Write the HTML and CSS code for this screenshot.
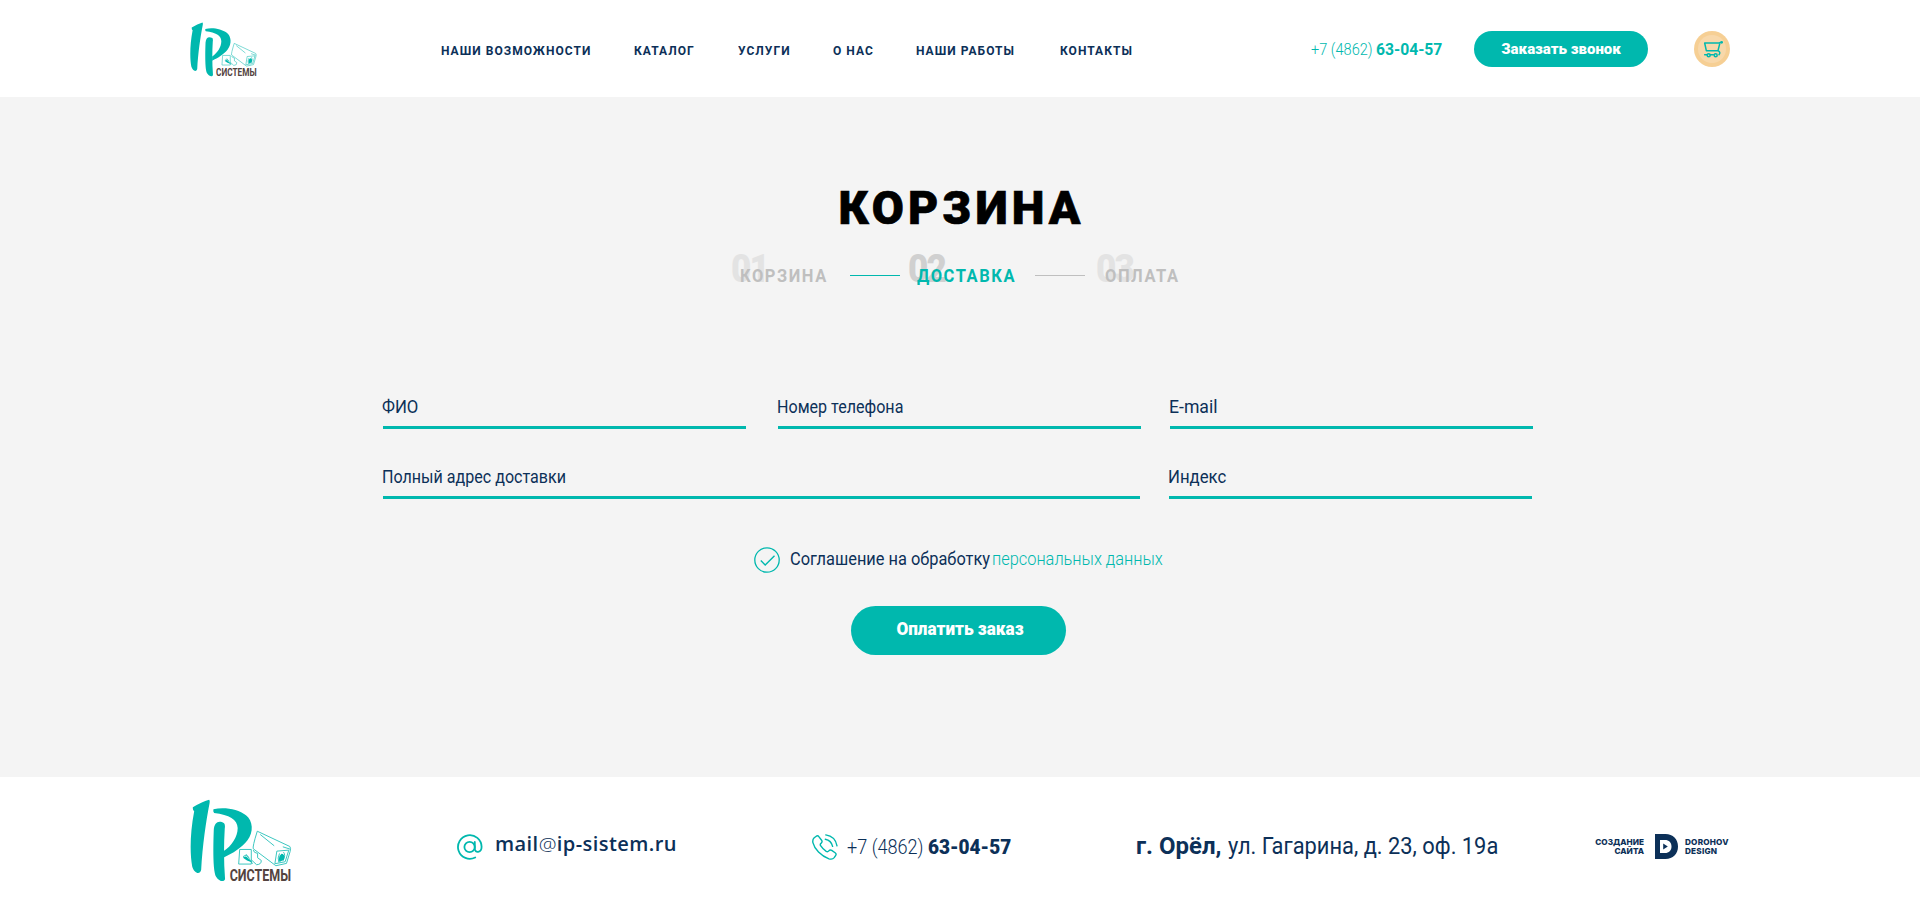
FILE: index.html
```html
<!DOCTYPE html>
<html lang="ru">
<head>
<meta charset="utf-8">
<title>Корзина — IP Системы</title>
<link rel="stylesheet" href="styles.css">
</head>
<body>
<svg class="defs" width="0" height="0" aria-hidden="true">
  <symbol id="logo" viewBox="62 85 306 250">
    <g fill="#00b8ae">
      <path d="M70 110Q96 93 119 87Q122 89 120 99C110 150 99 225 95 299C91 314 74 309 68 288C61 250 61 190 74 122Q69 119 70 110Z"/>
      <path d="M133 178C135 156 147 148 164 158Q168 162 166 175C163 225 163 275 167 326C164 337 149 333 140 319C130 303 131 230 133 178Z"/>
      <path d="M132 116C165 108 207 116 230 134C251 151 254 184 234 210C218 231 190 249 163 261L163 242C186 226 205 200 205 172C204 146 180 133 134 127Q130 122 132 116Z"/>
    </g>
    <g fill="none" stroke="#35c5bd" stroke-width="2.9" stroke-linejoin="round">
      <path d="M264 182L362 228Q366 232 363 243L352 279L320 286L252 235Q249 230 264 182Z"/>
      <path d="M273 192L315 226M341 229L363 236"/>
      <path d="M323 242L359 239L348 274L317 280ZM331 249Q324 263 329 276M343 245Q351 254 341 272"/>
      <path d="M211 237H246V281H208ZM252 239Q253 247 265 249V262L276 270Q277 282 262 283L246 268M230 251L250 280M221 259Q229 250 240 262"/>
    </g>
    <path d="M337 250Q325 259 331 275L344 268Q349 251 337 250ZM221 262Q230 253 238 266L249 276L233 270Z" fill="#00b8ae"/>
    <text class="logo-text" x="181" y="332" textLength="185" lengthAdjust="spacingAndGlyphs">СИСТЕМЫ</text>
  </symbol>
</svg>

<header class="header">
  <a class="logo"><svg width="67" height="55"><use href="#logo"/></svg></a>
  <nav class="nav">
    <a>НАШИ ВОЗМОЖНОСТИ</a><a>КАТАЛОГ</a><a>УСЛУГИ</a><a>О НАС</a><a>НАШИ РАБОТЫ</a><a>КОНТАКТЫ</a>
  </nav>
  <a class="phone"><span class="code">+7 (4862)</span><b>63-04-57</b></a>
  <button class="btn btn-call">Заказать звонок</button>
  <a class="cart">
    <svg width="36" height="36" viewBox="18 18 108 108">
      <circle cx="72" cy="72" r="54" fill="#f6cf94"/><circle cx="72" cy="72" r="42" fill="#f8d8aa"/>
      <g fill="none" stroke="#00b8ae" stroke-width="4.5" stroke-linejoin="round" stroke-linecap="round">
        <path d="M100 52L93 54H50L55 77H90L96 53M90 77Q99 82 93 89M50 89H57M67 89H76"/>
        <circle cx="62" cy="91" r="4.5"/><circle cx="83" cy="91" r="4.5"/>
      </g>
      <circle cx="101" cy="52" r="4" fill="#00b8ae"/>
    </svg>
  </a>
</header>

<main class="main">
  <h1 class="title">КОРЗИНА</h1>
  <div class="steps">
    <div class="step"><i>01</i><span>КОРЗИНА</span></div>
    <div class="line line-active"></div>
    <div class="step active"><i>02</i><span>ДОСТАВКА</span></div>
    <div class="line"></div>
    <div class="step"><i>03</i><span>ОПЛАТА</span></div>
  </div>

  <form class="form">
    <div class="row row-three">
      <label class="field"><span class="wide">ФИО</span></label>
      <label class="field"><span>Номер телефона</span></label>
      <label class="field"><span class="full">E-mail</span></label>
    </div>
    <div class="row row-two">
      <label class="field"><span>Полный адрес доставки</span></label>
      <label class="field"><span class="wide">Индекс</span></label>
    </div>
    <div class="consent">
      <svg width="26" height="26" viewBox="0 0 26 26" fill="none" stroke="#00b8ae"><circle cx="13" cy="13" r="12.2" stroke-width="1.3"/><path d="M6.8 13.6L11.2 18L20.5 8.8" stroke-width="1.4"/></svg>
      <span class="consent-text">Соглашение на обработку</span>
      <a class="consent-link">персональных данных</a>
    </div>
    <button class="btn btn-pay" type="button"><span>Оплатить заказ</span></button>
  </form>
</main>

<footer class="footer">
  <a class="footer-logo"><svg width="102" height="83"><use href="#logo"/></svg></a>
  <a class="contact">
    <svg width="26" height="26" viewBox="0 0 26 26" fill="none" stroke="#00b8ae" stroke-width="1.8" stroke-linecap="round"><circle cx="12.6" cy="13" r="5.2"/><path d="M17.8 8V14.8C17.8 19.4 24.6 19 24.6 12.8A11.8 11.8 0 1 0 18.2 23.5"/></svg>
    <span class="mail">mail<em>@</em>ip-sistem.ru</span>
  </a>
  <a class="contact">
    <svg width="26" height="26" viewBox="0 0 26 26" fill="none" stroke="#00b8ae" stroke-width="1.4" stroke-linecap="round" stroke-linejoin="round"><path d="M2.2 3.8L4.3 2.2Q5.8 1.2 7 2.8L9.6 6.2Q10.7 7.8 9.2 9.1Q7.7 10.3 8.6 11.7Q11 15.3 14.2 17.4Q15.7 18.3 16.8 16.9Q18.2 15.3 19.7 16.4L23.1 18.8Q24.7 20.1 23.7 21.4L22.2 23.6Q20.5 25.8 17 24.8Q11.2 22.8 6.5 18Q2 13.2 .9 8.6Q.3 5.7 2.2 3.8ZM13.8 .9Q23.2 2.3 25 11.8M13.3 5.2Q19.3 6.4 20.6 12.4"/></svg>
    <span class="footer-phone"><span class="code">+7 (4862)</span><b>63-04-57</b></span>
  </a>
  <address class="address"><b>г. Орёл,</b><span>ул. Гагарина, д. 23, оф. 19а</span></address>
  <a class="credit">
    <span class="made">СОЗДАНИЕ<br>САЙТА</span>
    <svg width="23" height="25" viewBox="0 0 23 25"><path fill="#0c3058" fill-rule="evenodd" d="M0 0H10.5C18 0 23 5 23 12.5S18 25 10.5 25H0ZM5 6V19H10C14 19 16.5 16.5 16.5 12.5S14 6 10 6ZM8.2 9.5L12.8 12.5L8.2 15.5Z"/></svg>
    <span class="studio">DOROHOV<br>DESIGN</span>
  </a>
</footer>
</body>
</html>
```
FILE: styles.css
```css
* { box-sizing: border-box; }
body { margin: 0; width: 1920px; height: 908px; overflow: hidden; background: #fff; color: #0c3058; font-family: Roboto, "Liberation Sans", sans-serif; white-space: nowrap; }
svg { display: block; }
.defs { position: absolute; }
.logo-text { font: 700 50px Roboto, sans-serif; fill: #54433f; }

.header { display: grid; grid-template-columns: 251px 869.5px 163.5px 220px 36px; height: 97px; padding-left: 190px; align-items: start; }
.logo { padding-top: 22px; }
.nav { display: grid; grid-template-columns: 193px 104px 95px 83px 143.5px 80px; padding-top: 41px; font-size: 13px; line-height: 20px; font-weight: 700; letter-spacing: 1.1px; }
.nav a { justify-self: start; transform: scaleX(.925); transform-origin: 0 50%; }
.phone { display: flex; padding-top: 40px; font-size: 16px; line-height: 20px; color: #00b8ae; }
.phone .code { width: 65px; font-weight: 300; transform: scaleX(.91); transform-origin: 0 50%; }
.phone b { transform: scaleX(.98); transform-origin: 0 50%; }
.btn { display: block; padding: 0; border: 0; background: #00b8ae; color: #fff; font-family: inherit; text-align: center; }
.btn-call { width: 174px; height: 36px; margin-top: 31px; border-radius: 18px; font-size: 15px; line-height: 36px; font-weight: 900; }
.cart { padding-top: 31px; }

.main { height: 680px; padding-top: 81px; background: #f4f4f4; }
.title { margin: 0; padding-left: 3px; font-size: 46.5px; line-height: 60px; font-weight: 900; letter-spacing: 4px; text-align: center; color: #000; -webkit-text-stroke: .7px #000; }
.steps { display: grid; grid-template-columns: 110px 67px 118px 70px 80px; align-items: center; height: 24px; margin: 26px 0 0 740px; font-size: 18px; line-height: 24px; font-weight: 700; color: #bfbfbf; }
.step { position: relative; }
.step i { position: absolute; left: -9px; top: -15px; font-size: 39px; line-height: 40px; font-style: normal; font-weight: 900; letter-spacing: -2px; color: #e3e3e3; transform: scaleX(.9); transform-origin: 0 50%; }
.step span { position: relative; display: block; letter-spacing: 1.7px; transform: scaleX(.915); transform-origin: 0 50%; }
.active { color: #00b8ae; }
.active i { color: #d0d0d0; }
.line { width: 50px; height: 1px; margin-bottom: 1px; background: #bfbfbf; }
.line-active { background: #00b8ae; }

.form { margin: 107px 0 0 383px; }
.row { display: grid; height: 34px; }
.row-three { grid-template-columns: 363px 363px 363px; column-gap: 32px; }
.row-three .field:last-child { margin-left: -3px; margin-right: 3px; }
.row-two { grid-template-columns: 757px 363px; column-gap: 29px; margin-top: 36px; }
.field { border-bottom: 3px solid #00b8ae; font-size: 18px; line-height: 24px; font-weight: 400; }
.field span { display: block; margin-left: -1px; transform: scaleX(.893); transform-origin: 0 50%; }
.field .wide { transform: scaleX(.93); }
.field .full { transform: scaleX(.98); }
.consent { display: grid; grid-template-columns: 36px 202px auto; align-items: center; height: 26px; margin: 48px 0 0 371px; font-size: 18px; line-height: 24px; }
.consent-text, .consent-link { margin-top: -2px; justify-self: start; transform: scaleX(.91); transform-origin: 0 50%; }
.consent-link { color: #00b8ae; font-weight: 300; }
.btn-pay { width: 215px; height: 49px; margin: 33px 0 0 468px; padding: 0 0 4px 3px; border-radius: 24.5px; font-size: 18px; font-weight: 900; }
.btn-pay span { display: block; transform: scaleX(.95); }

.footer { display: grid; grid-template-columns: 266px 355px 323px 460px 140px; height: 131px; padding-left: 191px; align-items: start; }
.footer-logo { padding-top: 22px; margin-left: -1px; }
.contact { display: grid; grid-template-columns: 38px auto; padding-top: 57px; justify-content: start; line-height: 26px; }
.contact + .contact { grid-template-columns: 35px auto; }
.mail { margin-top: -3px; font-family: "Open Sans", sans-serif; font-size: 19px; font-weight: 600; letter-spacing: .4px; transform: scaleX(1.055); transform-origin: 0 50%; }
.mail em { font-style: normal; font-weight: 300; }
.footer-phone { display: flex; font-size: 20px; }
.footer-phone .code { width: 81px; font-weight: 300; transform: scaleX(.905); transform-origin: 0 50%; }
.footer-phone b { font-weight: 900; transform: scaleX(.95); transform-origin: 0 50%; }
.address { display: flex; padding: 54px 0 0 1px; font-size: 23.5px; line-height: 30px; font-style: normal; }
.address b { width: 92px; transform: scaleX(1.02); transform-origin: 0 50%; }
.address span { font-weight: 400; transform: scaleX(.93); transform-origin: 0 50%; }
.credit { display: grid; grid-template-columns: 49px 23px 50px; column-gap: 7px; padding-top: 57px; font: 800 8.2px/8.5px Inter, sans-serif; }
.credit span { padding-top: 4px; }
.credit .made { text-align: right; }
.credit svg { margin-left: 4px; }
.credit .studio { margin-left: 4px; letter-spacing: .2px; }
```
